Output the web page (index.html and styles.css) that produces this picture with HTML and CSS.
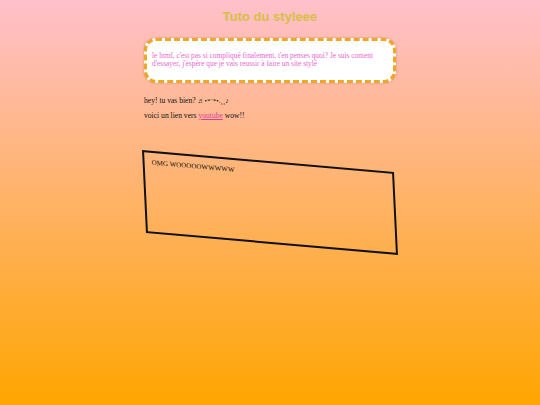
FILE: index.html
```html
<!DOCTYPE html>
<html lang="fr">
<head>
<meta charset="utf-8">
<title>Tuto du styleee</title>
<link rel="stylesheet" href="styles.css">
</head>
<body>
<div class="page">
  <h1 class="title">Tuto du styleee</h1>
  <div class="bubble">
    <p>le html, c'est pas si compliqué finalement, t'en penses quoi? Je suis content d'essayer, j'espère que je vais reussir à faire un site stylé</p>
  </div>
  <p class="line">hey! tu vas bien? <span class="music">♬•*¨*•.¸¸♪</span></p>
  <p class="line">voici un lien vers <a href="#" class="link">youtube</a> wow!!</p>
  <div class="skew">OMG WOOOOOWWWWW</div>
</div>
</body>
</html>
```
FILE: styles.css
```css
html, body {
  margin: 0;
  padding: 0;
  height: 100%;
}
body {
  background: linear-gradient(#ffc0cb, #ffa500);
  font-family: "Liberation Serif", "DejaVu Serif", serif;
  font-size: 7px;
  color: #111;
}
.page {
  width: 252px;
  margin: 0 auto;
  padding-top: 9px;
}
.title {
  margin: 0;
  text-align: center;
  font-family: "Liberation Sans", Arial, sans-serif;
  font-size: 13px;
  line-height: 15px;
  font-weight: bold;
  color: #d6bf45;
}
.bubble {
  margin-top: 14px;
  background: #fff;
  border: 3px dashed #f0a824;
  border-radius: 12px;
  padding: 11px 6px 12px 5px;
  box-shadow: 0 0 2px rgba(150, 90, 20, 0.5);
}
.bubble p {
  margin: 0;
  font-size: 7.4px;
  line-height: 8px;
  color: #ec66cc;
}
.line {
  margin: 14px 0 0 0;
  font-size: 7.6px;
  line-height: 8px;
}
.line + .line {
  margin-top: 7px;
}
.music {
  font-size: 7px;
}
.link {
  color: #d8409a;
}
.skew {
  margin-top: 41px;
  height: 83px;
  box-sizing: border-box;
  border: 2px solid #111;
  padding: 6px 7px;
  line-height: 8px;
  transform: matrix(1, 0.0876, 0.048, 1, 0, 0);
}
```
